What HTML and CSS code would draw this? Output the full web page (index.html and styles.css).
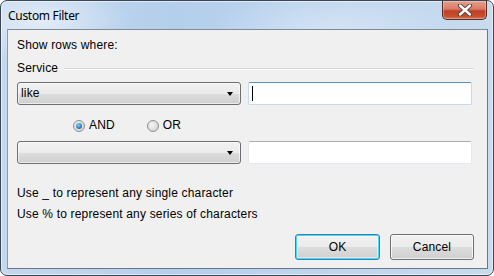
FILE: index.html
```html
<!DOCTYPE html>
<html>
<head>
<meta charset="utf-8">
<link rel="stylesheet" href="styles.css">
</head>
<body>
<div class="window">
  <div class="titlebar">
    <span class="title">Custom Filter</span>
    <div class="close">
      <svg width="16" height="12" viewBox="0 0 16 12">
        <path d="M3 1.5 L13 10.5 M13 1.5 L3 10.5" stroke="#4a3a36" stroke-width="4.2" stroke-linecap="round"/>
        <path d="M3 1.5 L13 10.5 M13 1.5 L3 10.5" stroke="#ffffff" stroke-width="2.4" stroke-linecap="round"/>
      </svg>
    </div>
  </div>
  <div class="client">
    <div class="text r1">Show rows where:</div>
    <div class="group r2"><span>Service</span><div class="rule"></div></div>
    <div class="row r3">
      <div class="combo"><span>like</span><i class="arrow"></i></div>
      <div class="input focused"><i class="caret"></i></div>
    </div>
    <div class="radios r4">
      <label class="radio"><i class="dot checked"></i>AND</label>
      <label class="radio"><i class="dot"></i>OR</label>
    </div>
    <div class="row r5">
      <div class="combo"><span></span><i class="arrow"></i></div>
      <div class="input"></div>
    </div>
    <div class="text r6">Use _ to represent any single character</div>
    <div class="text r7">Use % to represent any series of characters</div>
    <div class="buttons r8">
      <div class="btn default">OK</div>
      <div class="btn">Cancel</div>
    </div>
  </div>
</div>
</body>
</html>
```
FILE: styles.css
```css
html, body { margin: 0; padding: 0; }
body { width: 494px; height: 276px; overflow: hidden; background: #fff; }
.window {
  box-sizing: border-box;
  width: 494px; height: 276px;
  border: 1px solid #3a4654;
  border-radius: 7px;
  padding: 0 5px 6px 6px;
  display: flex; flex-direction: column;
  background:
    radial-gradient(ellipse 90px 40px at 40px 20px, rgba(255,255,255,0.55), rgba(255,255,255,0) 100%),
    radial-gradient(ellipse 120px 40px at 330px 30px, rgba(255,255,255,0.35), rgba(255,255,255,0) 100%),
    linear-gradient(90deg, #c4d8ee 0%, #b4cfec 35%, #bcd4ee 60%, #c8dbef 100%);
  box-shadow: inset 0 0 0 1px rgba(255,255,255,0.55);
}
.titlebar {
  height: 28px; flex: none;
  display: flex; align-items: flex-start;
}
.title {
  font-family: "Noto Sans", "Open Sans", sans-serif;
  font-size: 12px; line-height: 16px; letter-spacing: -0.3px;
  color: #000;
  margin: 7px 0 0 1px;
}
.close {
  margin-left: auto; margin-right: 1px;
  width: 45px; height: 19px; box-sizing: border-box;
  border: 1px solid #5a2a22; border-top: none;
  border-radius: 0 0 5px 5px;
  background: linear-gradient(180deg, #e6a090 0%, #d87a66 45%, #c23f28 55%, #c4502f 85%, #d4785a 100%);
  box-shadow: inset 0 0 0 1px rgba(255,255,255,0.3);
  display: flex; align-items: center; justify-content: center;
}
.client {
  flex: 1;
  box-sizing: border-box;
  border: 1px solid #6b7785;
  border-left-color: #8e9aa6; border-top-color: #7e8a96;
  background: #f0f0f0;
  padding: 8px 13px 0 9px;
  display: flex; flex-direction: column;
  font-family: "Liberation Sans", Arial, sans-serif;
  font-size: 12px; color: #000; letter-spacing: 0.17px;
}
.text { line-height: 15px; height: 15px; }
.r2 { margin-top: 8px; }
.r3 { margin-top: 6px; }
.r4 { margin-top: 13px; }
.r5 { margin-top: 8px; }
.r6 { margin-top: 22px; }
.r7 { margin-top: 6px; }
.r8 { margin-top: 12px; }
.group { display: flex; align-items: center; line-height: 15px; height: 15px; }
.rule { flex: 1; height: 1px; background: #d5d5d5; border-bottom: 1px solid #fff; margin: 1px 0 0 6px; }
.row { display: flex; gap: 7px; height: 23px; }
.combo {
  box-sizing: border-box; width: 224px; height: 23px;
  border: 1px solid #707070; border-radius: 3px;
  background: linear-gradient(180deg, #f2f2f2 0%, #ebebeb 50%, #dddddd 51%, #cfcfcf 100%);
  box-shadow: inset 0 0 0 1px rgba(255,255,255,0.6);
  display: flex; align-items: center; padding: 0 6px 0 3px;
  line-height: 15px;
}
.combo span { flex: 1; }
.arrow {
  width: 0; height: 0;
  border-left: 3.5px solid transparent; border-right: 3.5px solid transparent;
  border-top: 4px solid #000;
  margin-right: 1px;
}
.input {
  box-sizing: border-box; width: 224px; height: 23px;
  background: #fff;
  border: 1px solid #e3e9ef; border-top-color: #abadb3;
  border-radius: 2px;
  position: relative;
}
.input.focused { border-color: #c5daed; border-top-color: #5794bf; }
.caret { position: absolute; left: 3px; top: 3px; width: 1px; height: 15px; background: #000; }
.radios { display: flex; height: 15px; line-height: 15px; padding-left: 56px; gap: 32px; }
.radio { display: flex; align-items: center; gap: 4px; }
.dot {
  box-sizing: border-box; width: 12px; height: 12px; border-radius: 50%;
  border: 1px solid #8e8f8f;
  background: radial-gradient(circle at 40% 40%, #f6f6f6, #d4d4d4 80%);
  position: relative;
}
.dot.checked::after {
  content: ""; position: absolute; left: 2px; top: 2px; width: 6px; height: 6px; border-radius: 50%;
  background: radial-gradient(circle at 40% 35%, #8fd0f5, #1d6fb0 70%, #0f4a7e);
}
.buttons { display: flex; justify-content: flex-end; gap: 10px; }
.btn {
  box-sizing: border-box; width: 85px; height: 26px;
  border: 1px solid #707070; border-radius: 3px;
  background: linear-gradient(180deg, #f2f2f2 0%, #ebebeb 50%, #dddddd 51%, #cfcfcf 100%);
  box-shadow: inset 0 0 0 1px rgba(255,255,255,0.7);
  display: flex; align-items: center; justify-content: center;
  line-height: 15px;
}
.btn + .btn { width: 84px; }
.btn.default { border-color: #3c7fb1; box-shadow: inset 0 0 0 1px #48d8fb, inset 0 0 0 2px rgba(255,255,255,0.4); }
```
